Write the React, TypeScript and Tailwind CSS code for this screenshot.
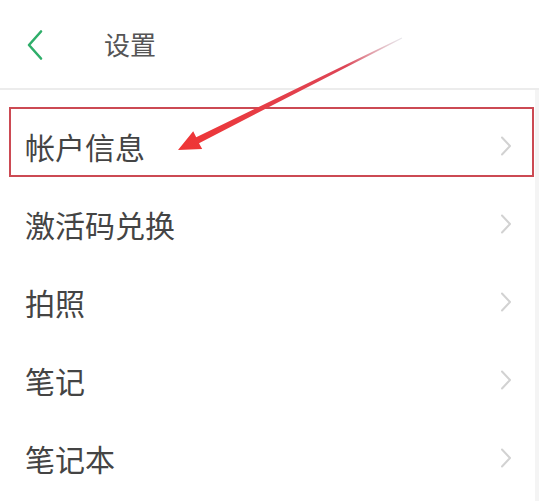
const items = ["帐户信息", "激活码兑换", "拍照", "笔记", "笔记本"];

const font = { fontFamily: '"Noto Sans CJK SC", "Noto Sans", sans-serif' };

function Chevron() {
  return (
    <svg width="14" height="22" viewBox="0 0 14 22">
      <path d="M3 2.5 L11 11 L3 19.5" fill="none" stroke="#d2d2d2" strokeWidth="2" strokeLinecap="round" strokeLinejoin="round" />
    </svg>
  );
}

export default function App() {
  return (
    <div className="relative w-[539px] h-[501px] overflow-hidden bg-white" style={font}>
      {/* header */}
      <div className="flex h-[88px] items-center">
        <svg width="20" height="32" viewBox="0 0 20 32" className="ml-[25px] mt-[2px]">
          <path d="M16 2.5 L4 16 L16 29.5" fill="none" stroke="#2fae6a" strokeWidth="2.6" strokeLinecap="round" strokeLinejoin="round" />
        </svg>
        <span className="ml-[59px] text-[26px] leading-none text-[#555]">设置</span>
      </div>
      <div className="h-[2px] bg-[#ececec]" />

      {/* list */}
      <div className="pt-[17px] pr-[4px]">
        {items.map((label) => (
          <div key={label} className="flex h-[78px] items-center pl-[25px] pr-[22px]">
            <span className="flex-1 text-[30px] leading-none text-[#444]">{label}</span>
            <Chevron />
          </div>
        ))}
      </div>

      {/* right edge strip */}
      <div className="absolute right-0 top-[90px] bottom-0 w-[4px] bg-[#f4f4f4]" />

      {/* highlight box */}
      <div className="absolute left-[9px] top-[107px] h-[70px] w-[525px] border-2 border-[#cc4a53]" />

      {/* annotation arrow */}
      <svg className="absolute left-0 top-0" width="539" height="501" viewBox="0 0 539 501">
        <defs>
          <linearGradient id="arrowFade" x1="402" y1="38" x2="178" y2="150" gradientUnits="userSpaceOnUse">
            <stop offset="0" stopColor="#d9d9e0" stopOpacity="0.6" />
            <stop offset="0.25" stopColor="#dd4556" />
            <stop offset="1" stopColor="#ef3535" />
          </linearGradient>
        </defs>
        <polygon
          points="401.8,37.6 402.2,38.4 199,143.2 202.2,149.1 178,150 193.2,131.3 196.2,137.2"
          fill="url(#arrowFade)"
        />
      </svg>
    </div>
  );
}
